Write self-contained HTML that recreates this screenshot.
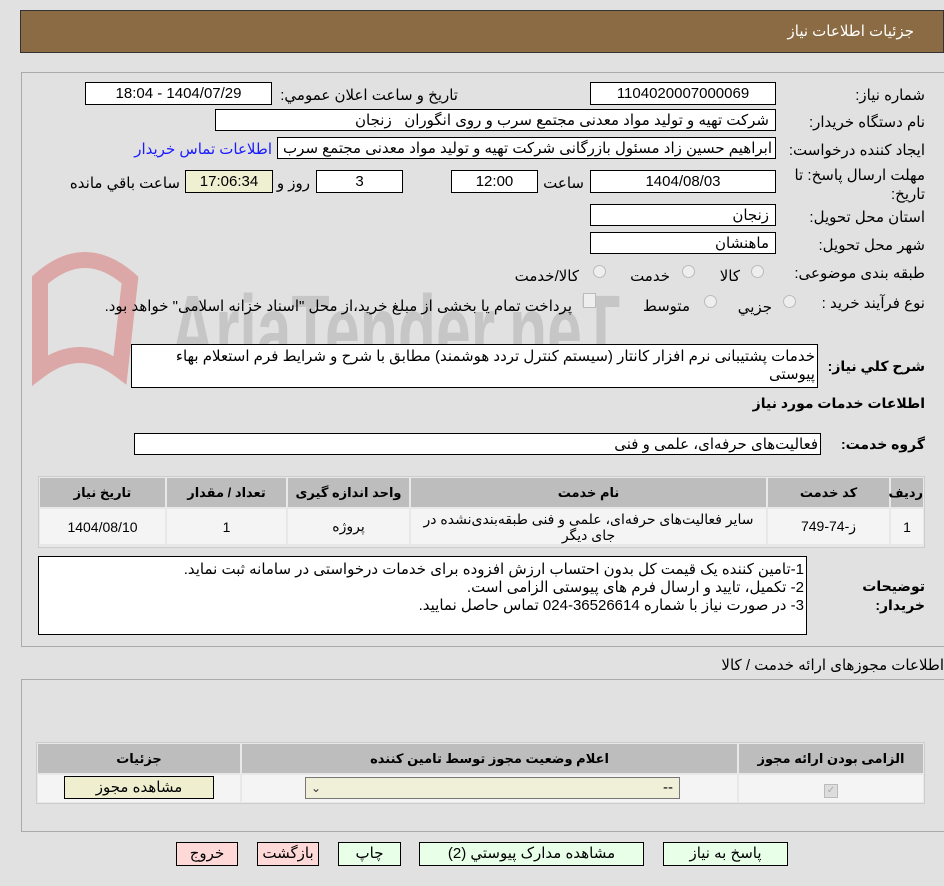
<!DOCTYPE html>
<html><head><meta charset="utf-8"><style>
body{margin:0;width:944px;height:886px;background:#e1e1e1;font-family:"Liberation Sans","DejaVu Sans",sans-serif;font-size:15px;color:#000;position:relative;overflow:hidden}
.a{position:absolute}
.box{position:absolute;background:#fff;border:1px solid #000;box-sizing:border-box;direction:rtl;padding:0 6px;line-height:21px;white-space:nowrap;overflow:hidden}
.c{text-align:center}
.l{position:absolute;direction:rtl;white-space:nowrap}
.b{font-weight:bold}
table{border-collapse:separate;border-spacing:2px;direction:rtl;table-layout:fixed}
th{background:#bdbdbd;font-size:13px;font-weight:bold;height:29px;padding:0}
td{background:#f4f4f4;text-align:center;font-size:14px;padding:0}
.btn{position:absolute;border:1px solid #000;box-sizing:border-box;text-align:center;line-height:21px;font-size:15px;direction:rtl}
.rad{position:absolute;width:13px;height:13px;border-radius:50%;border:1px solid #bbb;background:#eee;box-sizing:border-box}
</style></head><body>
<div class="a" style="left:20px;top:10px;width:924px;height:43px;background:#8b6b43;border:1px solid #333;box-sizing:border-box"></div>
<div class="l" style="right:30px;top:22px;color:#fff;font-size:15px">جزئیات اطلاعات نیاز</div>

<div class="a" style="left:21px;top:72px;width:923px;height:575px;border:1px solid #aaa;border-right:none;box-sizing:border-box"></div>
<svg class="a" style="left:20px;top:240px;opacity:.25" width="620" height="160"><path d="M20 40 Q65 0 110 40 L100 130 Q60 100 20 130 Z" fill="none" stroke="#c00" stroke-width="16"/><text x="150" y="125" font-size="100" font-family="Liberation Sans" font-weight="bold" fill="#777" textLength="450" lengthAdjust="spacingAndGlyphs">AriaTender.neT</text></svg>

<div class="l" style="right:19px;top:86px">شماره نیاز:</div>
<div class="box c" style="left:590px;top:82px;width:186px;height:23px">1104020007000069</div>
<div class="l" style="right:486px;top:86px">تاریخ و ساعت اعلان عمومي:</div>
<div class="box c" style="left:85px;top:82px;width:187px;height:23px">1404/07/29 - 18:04</div>

<div class="l" style="right:19px;top:113px">نام دستگاه خریدار:</div>
<div class="box" style="left:215px;top:109px;width:561px;height:22px">شرکت تهیه و تولید مواد معدنی مجتمع سرب و روی انگوران &nbsp; زنجان</div>

<div class="l" style="right:19px;top:141px">ایجاد کننده درخواست:</div>
<div class="box" style="left:277px;top:137px;width:499px;height:22px;padding:0 3px">ابراهیم حسین زاد مسئول بازرگانی شرکت تهیه و تولید مواد معدنی مجتمع سرب</div>
<div class="l" style="right:672px;top:140px;color:#1a1aff">اطلاعات تماس خریدار</div>

<div class="l" style="right:19px;top:166px">مهلت ارسال پاسخ: تا</div>
<div class="l" style="right:19px;top:185px">تاریخ:</div>
<div class="box c" style="left:590px;top:170px;width:186px;height:23px">1404/08/03</div>
<div class="l" style="right:360px;top:174px">ساعت</div>
<div class="box c" style="left:451px;top:170px;width:87px;height:23px">12:00</div>
<div class="box c" style="left:316px;top:170px;width:87px;height:23px">3</div>
<div class="l" style="right:634px;top:174px">روز و</div>
<div class="box c" style="left:185px;top:170px;width:88px;height:23px;background:#efefd2">17:06:34</div>
<div class="l" style="right:764px;top:174px">ساعت باقي مانده</div>

<div class="l" style="right:19px;top:208px">استان محل تحویل:</div>
<div class="box" style="left:590px;top:204px;width:186px;height:22px">زنجان</div>
<div class="l" style="right:19px;top:236px">شهر محل تحویل:</div>
<div class="box" style="left:590px;top:232px;width:186px;height:22px">ماهنشان</div>

<div class="l" style="right:19px;top:264px">طبقه بندی موضوعی:</div>
<div class="rad" style="left:751px;top:265px"></div><div class="l" style="right:204px;top:267px">کالا</div>
<div class="rad" style="left:682px;top:265px"></div><div class="l" style="right:274px;top:267px">خدمت</div>
<div class="rad" style="left:593px;top:265px"></div><div class="l" style="right:365px;top:267px">کالا/خدمت</div>

<div class="l" style="right:19px;top:294px">نوع فرآیند خرید :</div>
<div class="rad" style="left:783px;top:295px"></div><div class="l" style="right:172px;top:298px">جزيي</div>
<div class="rad" style="left:704px;top:295px"></div><div class="l" style="right:254px;top:297px">متوسط</div>
<div class="a" style="left:583px;top:293px;width:11px;height:13px;border:1px solid #bbb;background:#eee"></div>
<div class="l" style="right:372px;top:297px">پرداخت تمام یا بخشی از مبلغ خرید،از محل "اسناد خزانه اسلامی" خواهد بود.</div>

<div class="l b" style="right:19px;top:358px;font-size:14px">شرح كلي نياز:</div>
<div class="box" style="left:131px;top:344px;width:687px;height:44px;line-height:18px;white-space:normal;padding:3px 2px">خدمات پشتیبانی نرم افزار کانتار (سیستم کنترل تردد هوشمند) مطابق با شرح و شرایط فرم استعلام بهاء پیوستی</div>

<div class="l b" style="right:19px;top:395px;font-size:14px">اطلاعات خدمات مورد نياز</div>
<div class="l b" style="right:19px;top:436px;font-size:14px">گروه خدمت:</div>
<div class="box" style="left:134px;top:433px;width:687px;height:22px;padding:0 2px">فعالیت‌های حرفه‌ای، علمی و فنی</div>

<div class="a" style="left:38px;top:476px;width:887px;height:72px;background:#e8e8e8;border:1px solid #ccc;box-sizing:border-box">
<table style="width:887px;margin:-1px 0 0 -1px"><tr><th style="width:32px">ردیف</th><th style="width:121px">کد خدمت</th><th style="width:355px">نام خدمت</th><th style="width:121px">واحد اندازه گیری</th><th style="width:119px">تعداد / مقدار</th><th>تاریخ نیاز</th></tr>
<tr style="height:35px"><td>1</td><td>ز-74-749</td><td style="line-height:16px">سایر فعالیت‌های حرفه‌ای، علمی و فنی طبقه‌بندی‌نشده در جای دیگر</td><td>پروژه</td><td>1</td><td>1404/08/10</td></tr></table></div>

<div class="l b" style="right:19px;top:578px;font-size:14px">توضیحات</div>
<div class="l b" style="right:19px;top:597px;font-size:14px">خریدار:</div>
<div class="box" style="left:38px;top:556px;width:769px;height:79px;line-height:18px;white-space:normal;padding:4px 2px">1-تامین کننده یک قیمت کل بدون احتساب ارزش افزوده برای خدمات درخواستی در سامانه ثبت نماید.<br>2- تکمیل، تایید و ارسال فرم های پیوستی الزامی است.<br>3- در صورت نیاز با شماره 36526614-024 تماس حاصل نمایید.</div>

<div class="l" style="right:0px;top:656px">اطلاعات مجوزهای ارائه خدمت / کالا</div>
<div class="a" style="left:21px;top:679px;width:923px;height:153px;border:1px solid #aaa;border-right:none;box-sizing:border-box"></div>
<div class="a" style="left:36px;top:742px;width:889px;height:62px;background:#e8e8e8;border:1px solid #ccc;box-sizing:border-box">
<table style="width:889px;margin:-1px 0 0 -1px"><tr><th style="width:184px;height:28px">الزامی بودن ارائه مجوز</th><th style="width:495px">اعلام وضعیت مجوز توسط تامین کننده</th><th>جزئیات</th></tr>
<tr style="height:27px"><td><span style="display:inline-block;width:12px;height:12px;border:1px solid #bbb;background:#ddd;color:#aaa;font-size:10px;line-height:12px">✓</span></td><td></td><td></td></tr></table></div>
<div class="box" style="left:305px;top:777px;width:375px;height:22px;background:#f0f0d8;border-color:#777;line-height:20px">--<span style="position:absolute;left:5px;top:0;font-size:12px;color:#333">⌄</span></div>
<div class="btn" style="left:64px;top:776px;width:150px;height:23px;background:#efefcf">مشاهده مجوز</div>

<div class="btn" style="left:663px;top:842px;width:125px;height:24px;background:#e8ffe8">پاسخ به نیاز</div>
<div class="btn" style="left:419px;top:842px;width:225px;height:24px;background:#e8ffe8">مشاهده مدارک پیوستي (2)</div>
<div class="btn" style="left:338px;top:842px;width:63px;height:24px;background:#e8ffe8">چاپ</div>
<div class="btn" style="left:257px;top:842px;width:62px;height:24px;background:#ffd8d8">بازگشت</div>
<div class="btn" style="left:176px;top:842px;width:62px;height:24px;background:#ffd8d8">خروج</div>
</body></html>
